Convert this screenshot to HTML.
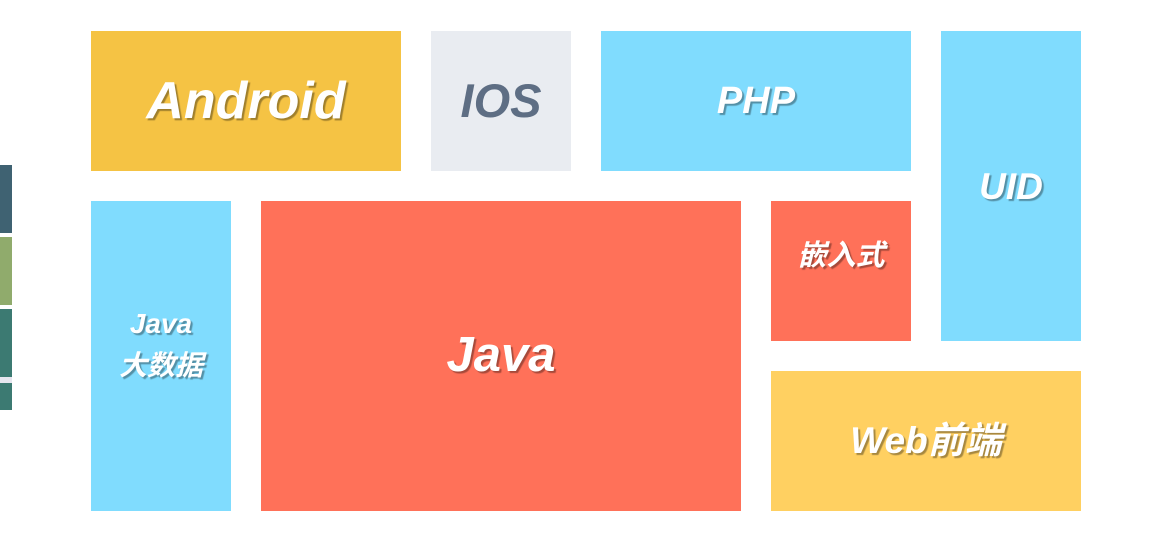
<!DOCTYPE html>
<html><head><meta charset="utf-8"><style>
body{margin:0;width:1154px;height:537px;background:#fff;position:relative;overflow:hidden;font-family:"Liberation Sans","Noto Sans CJK SC",sans-serif}
.b{position:absolute;display:flex;align-items:center;justify-content:center;text-align:center;color:#fff;font-weight:bold;font-style:italic;text-shadow:2px 2px 1px rgba(0,0,0,.35);line-height:1.3;box-sizing:border-box}
.s{position:absolute;left:0;width:12px}
</style></head><body>
<div class="s" style="top:165px;height:68px;background:#3f6272"></div>
<div class="s" style="top:237px;height:68px;background:#90ab6c"></div>
<div class="s" style="top:309px;height:68px;background:#3c7a72"></div>
<div class="s" style="top:377px;height:6px;background:#e6e6ef"></div>
<div class="s" style="top:383px;height:27px;background:#3c7a72"></div>
<div class="b" style="left:91px;top:31px;width:310px;height:140px;background:#f5c344;font-size:52px;padding-top:2px">Android</div>
<div class="b" style="left:431px;top:31px;width:140px;height:140px;background:#e9ecf1;color:#5e6e84;text-shadow:none;font-size:47px">IOS</div>
<div class="b" style="left:601px;top:31px;width:310px;height:140px;background:#80dcfe;font-size:38px;padding-top:2px">PHP</div>
<div class="b" style="left:941px;top:31px;width:140px;height:310px;background:#80dcfe;font-size:37px;padding-top:2px">UID</div>
<div class="b" style="left:91px;top:201px;width:140px;height:310px;background:#80dcfe;font-size:28px;line-height:42px;padding-bottom:22px">Java<br>大数据</div>
<div class="b" style="left:261px;top:201px;width:480px;height:310px;background:#ff7159;font-size:49px">Java</div>
<div class="b" style="left:771px;top:201px;width:140px;height:140px;background:#ff7159;font-size:29px;padding-bottom:28px">嵌入式</div>
<div class="b" style="left:771px;top:371px;width:310px;height:140px;background:#ffd061;font-size:37px">Web前端</div>
</body></html>
